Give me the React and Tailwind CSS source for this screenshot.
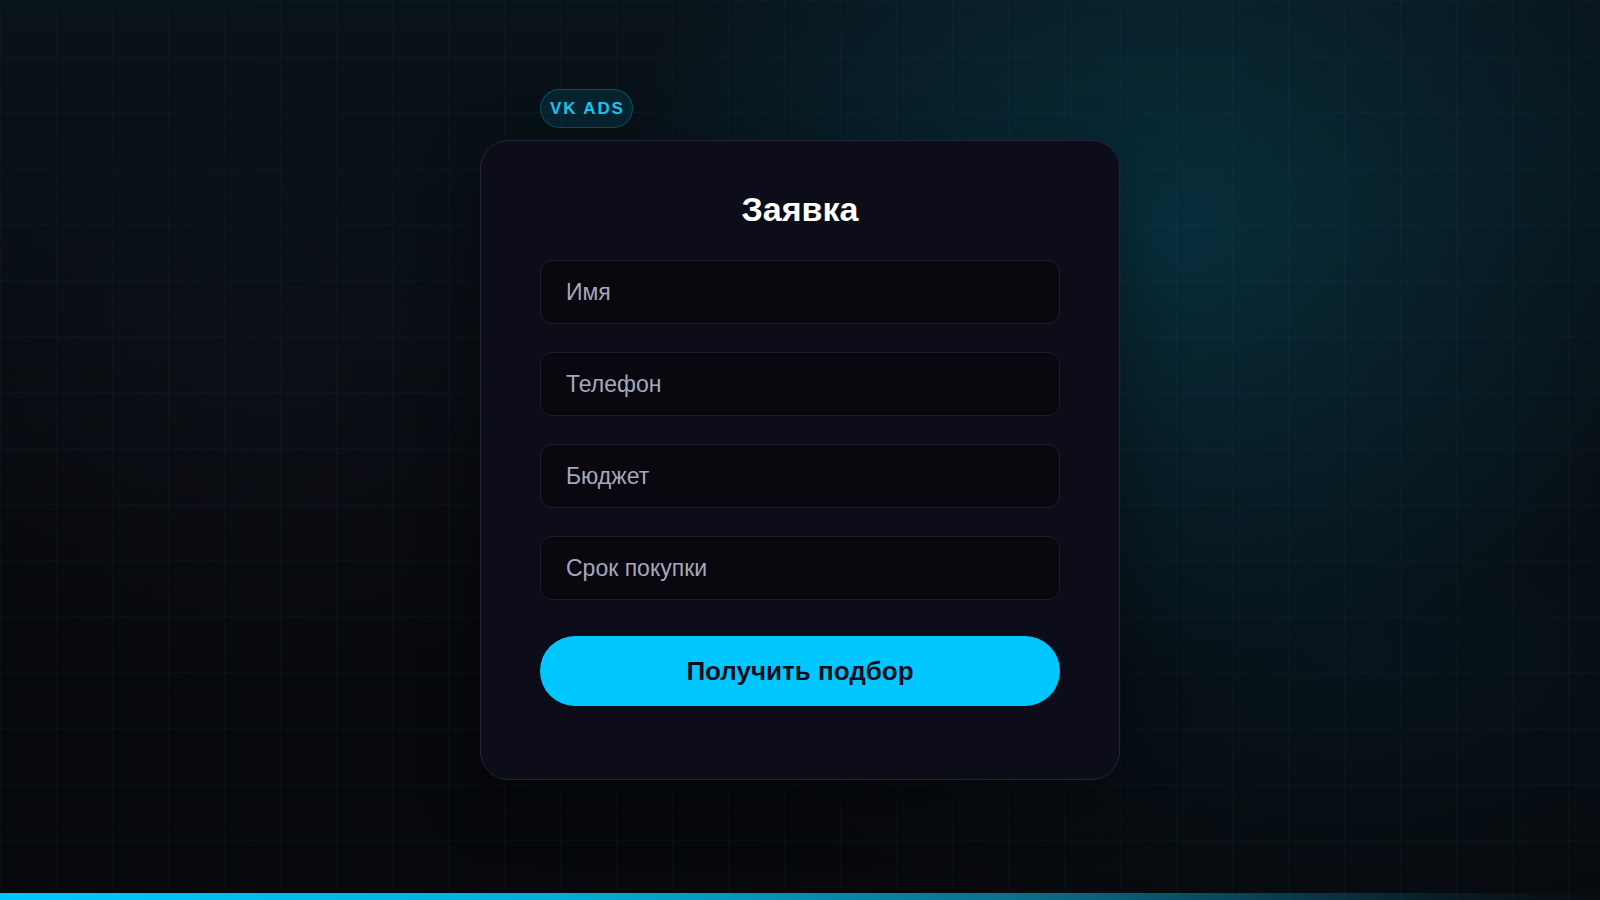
export default function App() {
  const fields = ["Имя", "Телефон", "Бюджет", "Срок покупки"];

  return (
    <div className="h-[900px] w-full flex flex-col overflow-hidden bg-[#07080c] font-['Liberation_Sans',Arial,sans-serif] bg-[linear-gradient(rgba(110,190,230,0.03)_1px,transparent_1px),linear-gradient(90deg,rgba(110,190,230,0.03)_1px,transparent_1px),radial-gradient(ellipse_760px_580px_at_1170px_230px,rgba(6,78,98,0.5),transparent_75%),radial-gradient(ellipse_900px_500px_at_1350px_650px,rgba(6,50,64,0.28),transparent_70%),radial-gradient(circle_420px_at_260px_380px,rgba(40,52,66,0.1),transparent_80%),linear-gradient(180deg,#09131a_0%,#08090e_60%,#07080b_100%)] bg-[size:56px_56px,56px_56px,100%_100%,100%_100%,100%_100%,100%_100%]">
      <main className="flex-1 flex flex-col items-center pt-[89px]">
        <div className="w-[640px] flex flex-col">
          {/* Platform label */}
          <div className="ml-[60px] mb-[12px] self-start h-[39px] pl-[9px] pr-[7px] flex items-center rounded-full border border-[rgba(0,190,240,0.28)] bg-[rgba(0,150,190,0.14)]">
            <span className="text-[17px] font-bold tracking-[0.11em] text-[#1cc6f2] leading-none">
              VK ADS
            </span>
          </div>

          {/* Request form */}
          <form
            className="rounded-[28px] border border-[#23253a] bg-[#0d0d19] px-[59px] pt-[48px] pb-[73px] flex flex-col shadow-[0_20px_60px_rgba(0,0,0,0.35)]"
            onSubmit={(e) => e.preventDefault()}
          >
            <h1 className="text-center text-[34px] leading-[40px] font-bold text-white mb-[31px]">
              Заявка
            </h1>
            <div className="flex flex-col gap-[28px]">
              {fields.map((f) => (
                <input
                  key={f}
                  type="text"
                  placeholder={f}
                  className="h-[64px] w-full rounded-[12px] border border-[#1d1e2c] bg-[#08080e] px-[25px] text-[23px] text-white placeholder:text-[#a7a7bc] outline-none"
                />
              ))}
            </div>
            <button
              type="submit"
              className="mt-[36px] h-[70px] w-full rounded-full bg-[#00c8ff] text-[26px] font-bold text-[#0a0f1c]"
            >
              Получить подбор
            </button>
          </form>
        </div>
      </main>
      <div className="h-[7px] w-full bg-[linear-gradient(90deg,#00c8ff_0%,#04aed8_35%,#0a6c88_65%,rgba(10,60,80,0.35)_90%,transparent_100%)]" />
    </div>
  );
}
